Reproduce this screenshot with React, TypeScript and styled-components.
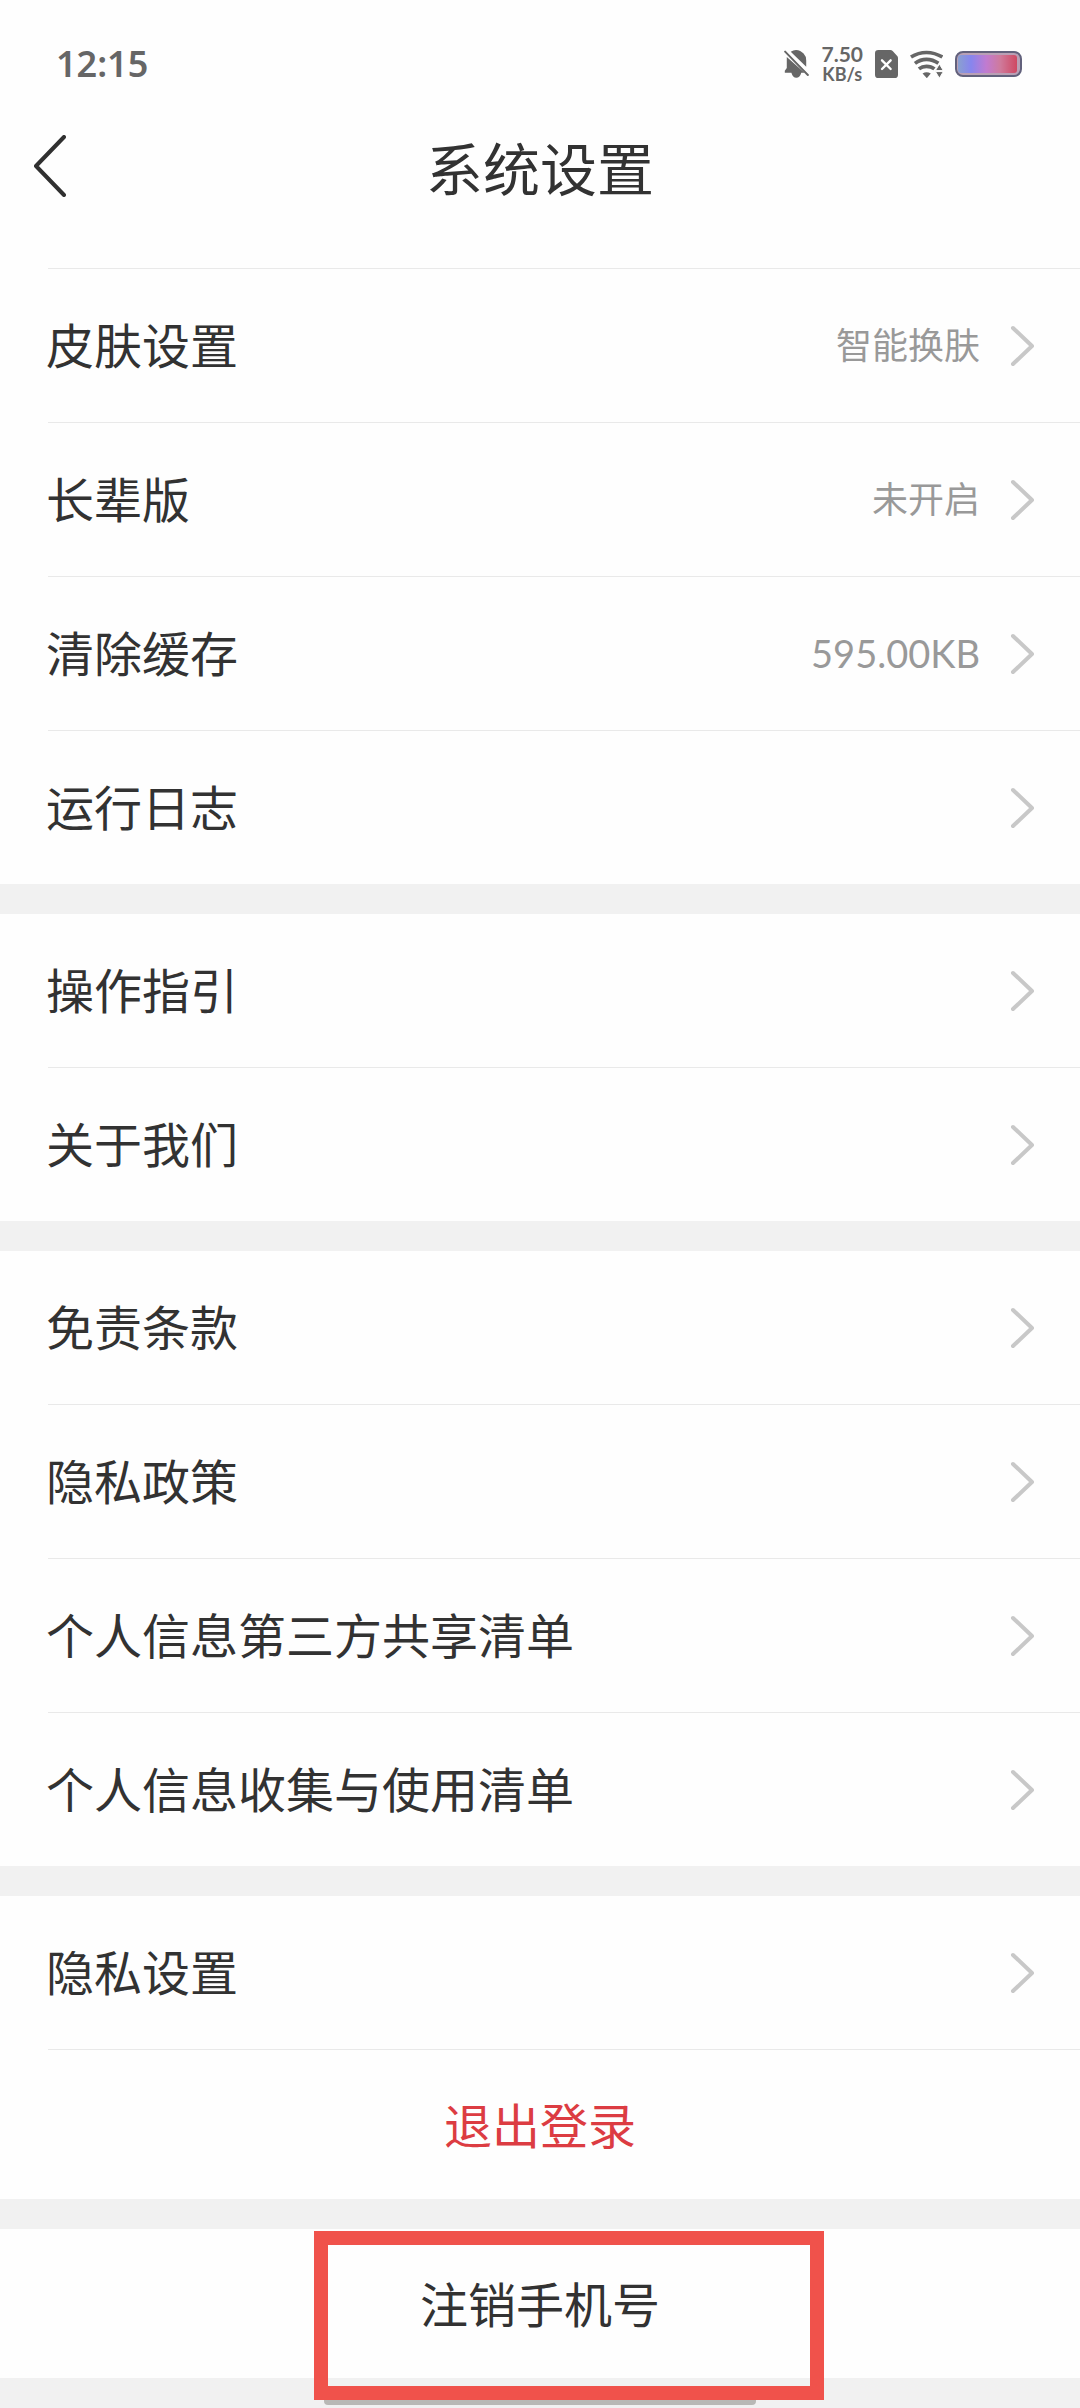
import React from "react";
import styled, { createGlobalStyle } from "styled-components";

const cjk = `"Noto Sans CJK SC", "Noto Sans", sans-serif`;
const latin = `Lato, "Noto Sans CJK SC", sans-serif`;

const GlobalStyle = createGlobalStyle`
  *, *::before, *::after { box-sizing: border-box; }
  body { margin: 0; background: #f1f1f1; font-family: ${cjk}; color: #323232; }
  button { margin: 0; padding: 0; border: 0; background: none; font: inherit; color: inherit; cursor: pointer; }
  svg { display: block; flex: none; }
`;

const Page = styled.div`
  display: flex;
  flex-direction: column;
`;

const TopArea = styled.div`
  background: #fefefe;
`;

const StatusBar = styled.div`
  display: flex;
  align-items: center;
  justify-content: space-between;
  height: 128px;
  padding: 0 58px 0 56px;
  color: #666;
  font-family: ${latin};
`;

const Clock = styled.time`
  font-family: "Noto Sans", sans-serif;
  font-size: 36px;
  line-height: 40px;
  font-weight: 600;
`;

const StatusIcons = styled.div`
  display: flex;
  align-items: center;
  gap: 12px;
`;

const Speed = styled.div`
  display: flex;
  flex-direction: column;
  align-items: center;
  font-weight: 700;
  font-size: 21px;
  line-height: 20px;
`;

const SpeedUnit = styled.span`
  font-size: 18px;
`;

const Header = styled.header`
  display: grid;
  grid-template-columns: 96px 1fr 96px;
  align-items: center;
  height: 76px;
  margin-bottom: 64px;
`;

const BackButton = styled.button`
  display: flex;
  align-items: center;
  height: 76px;
  padding-left: 32px;
`;

const Title = styled.h1`
  margin: 0;
  font-size: 57px;
  line-height: 76px;
  font-weight: 400;
  text-align: center;
`;

const Sections = styled.main`
  display: flex;
  flex-direction: column;
  gap: 30px;
`;

const Section = styled.section`
  position: relative;
  background: #fefefe;
`;

const Divider = styled.hr`
  height: 1px;
  margin: 0 0 0 48px;
  border: 0;
  background: #e9e9e9;
`;

const Row = styled.button`
  display: flex;
  align-items: center;
  width: 100%;
  height: 153px;
  padding: 0 44px 0 46px;
  text-align: left;
`;

const RowLabel = styled.span`
  flex: 1;
  padding-bottom: 6px;
  font-size: 48px;
  line-height: 72px;
`;

const RowValue = styled.span<{ $latin?: boolean }>`
  margin-right: 28px;
  padding-bottom: ${(p) => (p.$latin ? 2 : 6)}px;
  color: #999;
  font-family: ${(p) => (p.$latin ? latin : cjk)};
  font-size: ${(p) => (p.$latin ? 38 : 36)}px;
  line-height: 56px;
`;

const ActionButton = styled.button<{ $danger?: boolean }>`
  display: block;
  width: 100%;
  height: 149px;
  padding-bottom: 4px;
  font-size: 48px;
  line-height: 72px;
  text-align: center;
  color: ${(p) => (p.$danger ? "#dc3c42" : "inherit")};
`;

const Highlight = styled.div`
  position: absolute;
  z-index: 1;
  top: 2px;
  left: calc(50% - 226px);
  width: 510px;
  height: 169px;
  border: 14px solid #f0524b;
  pointer-events: none;
`;

const HomeArea = styled.footer`
  display: flex;
  align-items: flex-end;
  justify-content: center;
  height: 30px;
  padding-bottom: 3px;
`;

const HomeIndicator = styled.div`
  width: 40%;
  height: 10px;
  border-radius: 4px;
  background: #b8b8b5;
`;

const BellOff = () => (
  <svg width="25" height="28" viewBox="78 60 75 85" fill="#666" aria-hidden="true">
    <path d="M98 65Q106 60 114 60q14 1 23 11 8 8 8 21v19z" />
    <path d="M86 81l54 48h-10q-4 15-15 15t-15-15H80v-6l6-8z" />
    <path d="M81 65l69 71" stroke="#666" strokeWidth="6" strokeLinecap="round" />
    <path d="M88 62l64 65" stroke="#fefefe" strokeWidth="5" />
  </svg>
);

const SimOff = () => (
  <svg width="23" height="28" viewBox="354 60 69 84" aria-hidden="true">
    <path fill="#666" d="M364 60h36q4 0 7 3l13 14q3 3 3 7v50q0 10-10 10h-49q-10 0-10-10V70q0-10 10-10z" />
    <path d="M375 91l26 26m0-26l-26 26" stroke="#fefefe" strokeWidth="7" strokeLinecap="round" />
  </svg>
);

const Wifi = () => (
  <svg width="33" height="28" viewBox="456 61 100 84" fill="none" stroke="#666" strokeWidth="11" aria-hidden="true">
    <path d="M459 82q22-14 47-14t48 14" />
    <path d="M471 101q16-12 35-12t36 12" />
    <path d="M483 118q10-8 23-8 14 0 24 8" />
    <path fill="#666" stroke="none" d="M494 132q12-8 25 0l-12 14z" />
    <path fill="#666" stroke="#fefefe" strokeWidth="3" d="M533 123l12-20 12 20zM533 126h24l-12 20z" />
  </svg>
);

const Battery = () => (
  <svg width="67" height="26" viewBox="0 0 67 26" aria-hidden="true">
    <defs>
      <linearGradient id="charge">
        <stop offset="0" stopColor="#8aa0cf" />
        <stop offset="0.22" stopColor="#8785ee" />
        <stop offset="0.48" stopColor="#c17bd0" />
        <stop offset="0.72" stopColor="#cf7a9b" />
        <stop offset="1" stopColor="#cf4862" />
      </linearGradient>
    </defs>
    <rect x="1" y="1" width="65" height="24" rx="7" fill="#b9a0b5" stroke="#62617c" strokeWidth="2" />
    <rect x="3" y="4" width="59" height="18" rx="3" fill="url(#charge)" />
  </svg>
);

const BackIcon = () => (
  <svg width="34" height="62" viewBox="0 0 34 62" fill="none" stroke="#303030" strokeWidth="4" strokeLinecap="round" strokeLinejoin="round" aria-hidden="true">
    <path d="M32 2L4 31l28 29" />
  </svg>
);

const Chevron = () => (
  <svg width="28" height="42" viewBox="0 0 28 42" fill="none" stroke="#c8c8c8" strokeWidth="4" strokeLinecap="round" strokeLinejoin="round" aria-hidden="true">
    <path d="M5 3l19 18L5 39" />
  </svg>
);

type Item = { label: string; value?: string; latin?: boolean };

const groups: Item[][] = [
  [
    { label: "皮肤设置", value: "智能换肤" },
    { label: "长辈版", value: "未开启" },
    { label: "清除缓存", value: "595.00KB", latin: true },
    { label: "运行日志" },
  ],
  [{ label: "操作指引" }, { label: "关于我们" }],
  [
    { label: "免责条款" },
    { label: "隐私政策" },
    { label: "个人信息第三方共享清单" },
    { label: "个人信息收集与使用清单" },
  ],
  [{ label: "隐私设置" }],
];

export default function App() {
  return (
    <Page>
      <GlobalStyle />
      <TopArea>
        <StatusBar>
          <Clock>12:15</Clock>
          <StatusIcons>
            <BellOff />
            <Speed>
              7.50
              <SpeedUnit>KB/s</SpeedUnit>
            </Speed>
            <SimOff />
            <Wifi />
            <Battery />
          </StatusIcons>
        </StatusBar>
        <Header>
          <BackButton aria-label="返回">
            <BackIcon />
          </BackButton>
          <Title>系统设置</Title>
        </Header>
      </TopArea>
      <Sections>
        {groups.map((items, g) => (
          <Section key={g}>
            {items.map((item, i) => (
              <React.Fragment key={item.label}>
                {(g === 0 || i > 0) && <Divider />}
                <Row>
                  <RowLabel>{item.label}</RowLabel>
                  {item.value && <RowValue $latin={item.latin}>{item.value}</RowValue>}
                  <Chevron />
                </Row>
              </React.Fragment>
            ))}
            {g === groups.length - 1 && (
              <>
                <Divider />
                <ActionButton $danger>退出登录</ActionButton>
              </>
            )}
          </Section>
        ))}
        <Section>
          <ActionButton>注销手机号</ActionButton>
          <Highlight />
        </Section>
      </Sections>
      <HomeArea>
        <HomeIndicator />
      </HomeArea>
    </Page>
  );
}
